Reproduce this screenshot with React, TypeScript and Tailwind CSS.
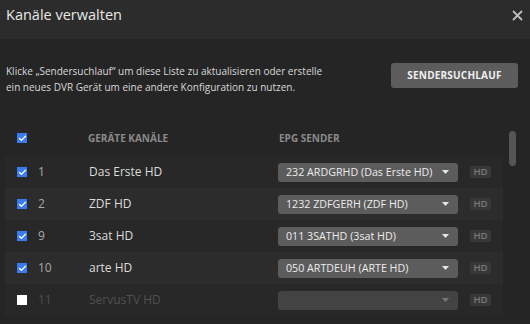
import { Check } from 'lucide-react';

type Row = { num: number; name: string; epg: string; enabled: boolean };

const rows: Row[] = [
  { num: 1, name: 'Das Erste HD', epg: '232 ARDGRHD (Das Erste HD)', enabled: true },
  { num: 2, name: 'ZDF HD', epg: '1232 ZDFGERH (ZDF HD)', enabled: true },
  { num: 9, name: '3sat HD', epg: '011 3SATHD (3sat HD)', enabled: true },
  { num: 10, name: 'arte HD', epg: '050 ARTDEUH (ARTE HD)', enabled: true },
  { num: 11, name: 'ServusTV HD', epg: '', enabled: false },
];

function Checkbox({ checked }: { checked: boolean }) {
  return checked ? (
    <div className="w-[10px] h-[10px] bg-[#3a7bf0] flex items-center justify-center">
      <Check size={9} strokeWidth={3.5} className="text-white" />
    </div>
  ) : (
    <div className="w-[10px] h-[10px] bg-white" />
  );
}

function Caret({ dim }: { dim?: boolean }) {
  return (
    <svg width="7" height="4" viewBox="0 0 7 4">
      <path d="M0 0 L7 0 L3.5 4 Z" fill={dim ? '#777' : '#e5e5e5'} />
    </svg>
  );
}

export default function App() {
  return (
    <div className="w-[530px] h-[324px] overflow-hidden bg-[#252525] font-['Open_Sans',sans-serif]">
      {/* header */}
      <div className="h-[39px] bg-[#2c2c2c] flex items-center justify-between pl-[6px] pr-[7px]">
        <h1 className="text-[14.5px] text-[#e8e8e8] leading-none -mt-[8px]">Kanäle verwalten</h1>
        <svg width="11" height="11" viewBox="0 0 11 11" className="-mt-[8px]">
          <path d="M1 1 L10 10 M10 1 L1 10" stroke="#bdbdbd" strokeWidth="1.8" />
        </svg>
      </div>

      {/* description + button */}
      <div className="flex items-start justify-between pl-[6px] pr-[12px] pt-[24px]">
        <p className="text-[10px] leading-[16px] text-[#d8d8d8]">
          Klicke „Sendersuchlauf“ um diese Liste zu aktualisieren oder erstelle
          <br />
          ein neues DVR Gerät um eine andere Konfiguration zu nutzen.
        </p>
        <button className="w-[127px] h-[25px] rounded-[3px] bg-[#5c5c5c] text-[10px] font-bold text-[#f0f0f0] tracking-[0.2px]">
          SENDERSUCHLAUF
        </button>
      </div>

      {/* table */}
      <div className="flex mt-[25px]">
        <div className="w-[498px] ml-[5px]">
          <div className="h-[36px] flex items-center text-[10px] font-bold text-[#8a8a8a]">
            <div className="w-[51px] pl-[12px]"><Checkbox checked /></div>
            <div className="w-[32px]" />
            <div className="w-[191px]">GERÄTE KANÄLE</div>
            <div>EPG SENDER</div>
          </div>
          <div className="bg-[#282828]">
            {rows.map((r, i) => (
              <div
                key={r.num}
                className={`h-[32px] flex items-center ${i % 2 === 1 ? 'bg-[#2c2c2c]' : ''}`}
              >
                <div className="w-[33px] pl-[12px]"><Checkbox checked={r.enabled} /></div>
                <div className={`w-[51px] text-[12px] ${r.enabled ? 'text-[#a8a8a8]' : 'text-[#4e4e4e]'}`}>{r.num}</div>
                <div className={`w-[189px] text-[12px] ${r.enabled ? 'text-[#dcdcdc]' : 'text-[#505050]'}`}>{r.name}</div>
                <div
                  className={`w-[180px] h-[19px] rounded-[3px] flex items-center justify-between pl-[8px] pr-[9px] ${r.enabled ? 'bg-[#5c5c5c]' : 'bg-[#434343]'}`}
                >
                  <span className="text-[10.7px] text-[#ececec] leading-none">{r.epg}</span>
                  <Caret dim={!r.enabled} />
                </div>
                <div className="ml-[12px] w-[21px] h-[12px] rounded-[2px] bg-[#383838] flex items-center justify-center text-[9.5px] font-semibold text-[#7a7a7a] leading-none">
                  HD
                </div>
              </div>
            ))}
          </div>
        </div>
        <div className="ml-[6px] mt-[11px] w-[7px] h-[35px] rounded-full bg-[#555555]" />
      </div>
    </div>
  );
}
